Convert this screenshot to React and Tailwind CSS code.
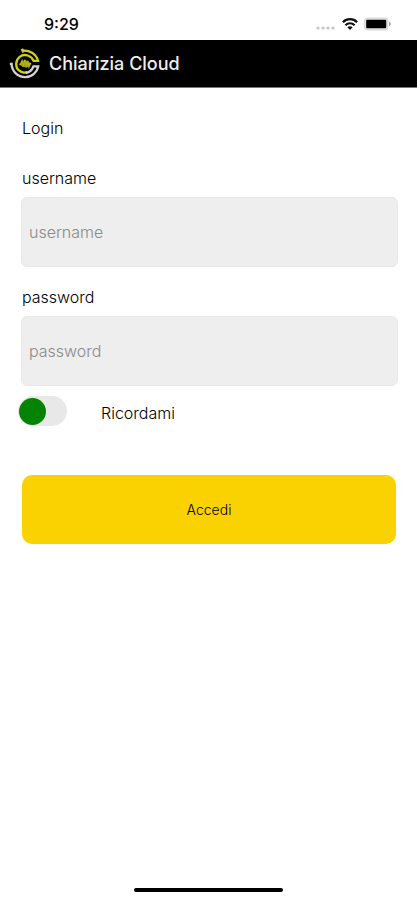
import { useState } from "react";

function StatusBar() {
  return (
    <div className="flex h-10 items-center justify-between pt-2 pr-[26px] pl-11">
      <span className="text-base font-medium">9:29</span>

      <div className="flex items-center gap-[6px]">
        <svg width="20" height="14" viewBox="0 0 20 14" fill="#c4c4c4">
          <circle cx="2" cy="11" r="1.6" />
          <circle cx="7" cy="11" r="1.6" />
          <circle cx="12" cy="11" r="1.6" />
          <circle cx="17" cy="11" r="1.6" />
        </svg>
        <svg width="16" height="14" viewBox="0 0 16 14" fill="none" stroke="#111" strokeWidth="2.2">
          <path d="M0.9 5.2 C4.8 1.2 11.2 1.2 15.1 5.2" />
          <path d="M3.4 8.2 C6 5.6 10 5.6 12.6 8.2" />
          <path d="M8 13 L5.4 10.3 C6.9 9 9.1 9 10.6 10.3 Z" fill="#111" stroke="none" />
        </svg>
        <svg width="27" height="14" viewBox="0 0 27 14">
          <rect x="0.5" y="1" width="23.5" height="12" rx="3" fill="#e4e4e4" stroke="#d6d6d6" />
          <rect x="2.2" y="2.7" width="20" height="8.6" rx="1" fill="#000" />
          <path d="M25.2 4.8 C27.2 5.6 27.2 8.4 25.2 9.2 Z" fill="#8f8f8f" />
        </svg>
      </div>
    </div>
  );
}

function Logo() {
  return (
    <svg width="32" height="32" viewBox="0 0 32 32" fill="none" strokeWidth="2.3">
      <g stroke="#d2cf1b">
        <path d="M13 2.8 C20.4 1.8 27.2 5.6 29 12.8 H24.6 C22.4 7.6 15.6 5.2 11 8.6 C6.4 12 6 18.6 9.6 22.2 C12 24.4 15.6 25 18.4 23.8" />
        <path d="M12.8 0.8 L14.6 4.4" strokeWidth="2.6" />
        <path
          d="M10.4 16.4 H11.8 L13 13.6 L14.4 18.8 L15.8 12 L17.4 19.4 L18.6 13 L20 18 L21 15.6 H22.2"
          strokeWidth="1.8"
        />
        <ellipse cx="16.2" cy="15.9" rx="4.8" ry="3.4" fill="#a5a316" stroke="none" opacity="0.8" />
      </g>
      <path
        d="M0.8 15.8 H2.6 C2.8 23.4 8.8 29.4 16.6 29.2 C23.2 29 28 24.4 29.2 18.4 H24.4 C23.2 22 20.6 24.4 16.6 25.2"
        stroke="#d4d0d4"
      />
    </svg>
  );
}

function Field({ id, label, type, autoComplete, value, onChange }) {
  return (
    <div className="flex flex-col gap-[7px]">
      <label htmlFor={id} className="pl-px text-base leading-6">
        {label}
      </label>
      <input
        id={id}
        type={type}
        autoComplete={autoComplete}
        placeholder={label}
        value={value}
        onChange={(e) => onChange(e.target.value)}
        className="h-[70px] w-full rounded-md border border-[#e9e9e9] bg-[#eeeeee] px-[7px] text-base placeholder:text-[#8a8a8a]"
      />
    </div>
  );
}

export default function App() {
  const [username, setUsername] = useState("");
  const [password, setPassword] = useState("");
  const [remember, setRemember] = useState(false);

  return (
    <div className="flex min-h-screen flex-col bg-white font-['Inter','Liberation_Sans',sans-serif] text-black">
      <StatusBar />

      <header className="flex h-12 items-center gap-2 border-b border-[#777] bg-black pt-px pl-[9px]">
        <Logo />
        <span className="text-lg font-medium text-[#eeeeee]">Chiarizia Cloud</span>
      </header>

      <main className="grow pt-7 pr-[19px] pl-[21px]">
        <form onSubmit={(e) => e.preventDefault()}>
          <h1 className="pl-px text-base leading-6 font-light">Login</h1>

          <div className="mt-[26px] flex flex-col gap-[18px] font-light">
            <Field
              id="username"
              label="username"
              type="text"
              autoComplete="username"
              value={username}
              onChange={setUsername}
            />
            <Field
              id="password"
              label="password"
              type="password"
              autoComplete="current-password"
              value={password}
              onChange={setPassword}
            />
          </div>

          <div className="mt-[10px] -ml-[3px] flex items-center gap-[34px]">
            <input
              id="remember"
              type="checkbox"
              role="switch"
              checked={remember}
              onChange={(e) => setRemember(e.target.checked)}
              className="flex h-[30px] w-[49px] appearance-none items-center rounded-full bg-[#e8e8e8] px-px before:size-[27px] before:rounded-full before:bg-[#058305] checked:justify-end"
            />
            <label htmlFor="remember" className="pt-1 text-base leading-6 font-light">
              Ricordami
            </label>
          </div>

          <div className="mt-[49px] pr-[2px] pl-px">
            <button type="submit" className="h-[69px] w-full rounded-[10px] bg-[#fad201] text-sm font-light">
              Accedi
            </button>
          </div>
        </form>
      </main>

      <footer className="flex justify-center pb-2">
        <div className="h-1 w-[149px] rounded-full bg-black" />
      </footer>
    </div>
  );
}
